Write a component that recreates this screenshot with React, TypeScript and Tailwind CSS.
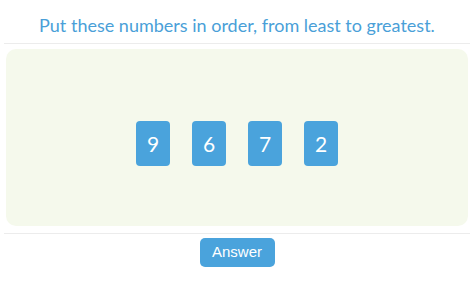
const numbers = [9, 6, 7, 2];

export default function App() {
  return (
    <div className="w-[474px] h-[282px] bg-white px-[4px] font-['Lato',sans-serif]">
      {/* Question */}
      <div className="h-[44px] border-b border-[#ececec] flex items-center justify-center pt-[6px]">
        <h1 className="text-[18px] text-[#4a9fd8] leading-none">
          Put these numbers in order, from least to greatest.
        </h1>
      </div>

      {/* Number tiles */}
      <div className="mt-[5px] mx-[2px] h-[177px] rounded-[10px] bg-[#f5f9ec] flex items-center justify-center gap-[22px] pt-[12px]">
        {numbers.map((n) => (
          <div
            key={n}
            className="w-[34px] h-[45px] rounded-[4px] bg-[#4aa3dc] text-white text-[21px] flex items-center justify-center"
          >
            {n}
          </div>
        ))}
      </div>

      {/* Answer */}
      <div className="mt-[7px] border-t border-[#ececec] flex justify-center pt-[4px]">
        <button className="w-[75px] h-[29px] rounded-[5px] bg-[#4aa3dc] text-white text-[15px] font-['Liberation_Sans',sans-serif]">
          Answer
        </button>
      </div>
    </div>
  );
}
